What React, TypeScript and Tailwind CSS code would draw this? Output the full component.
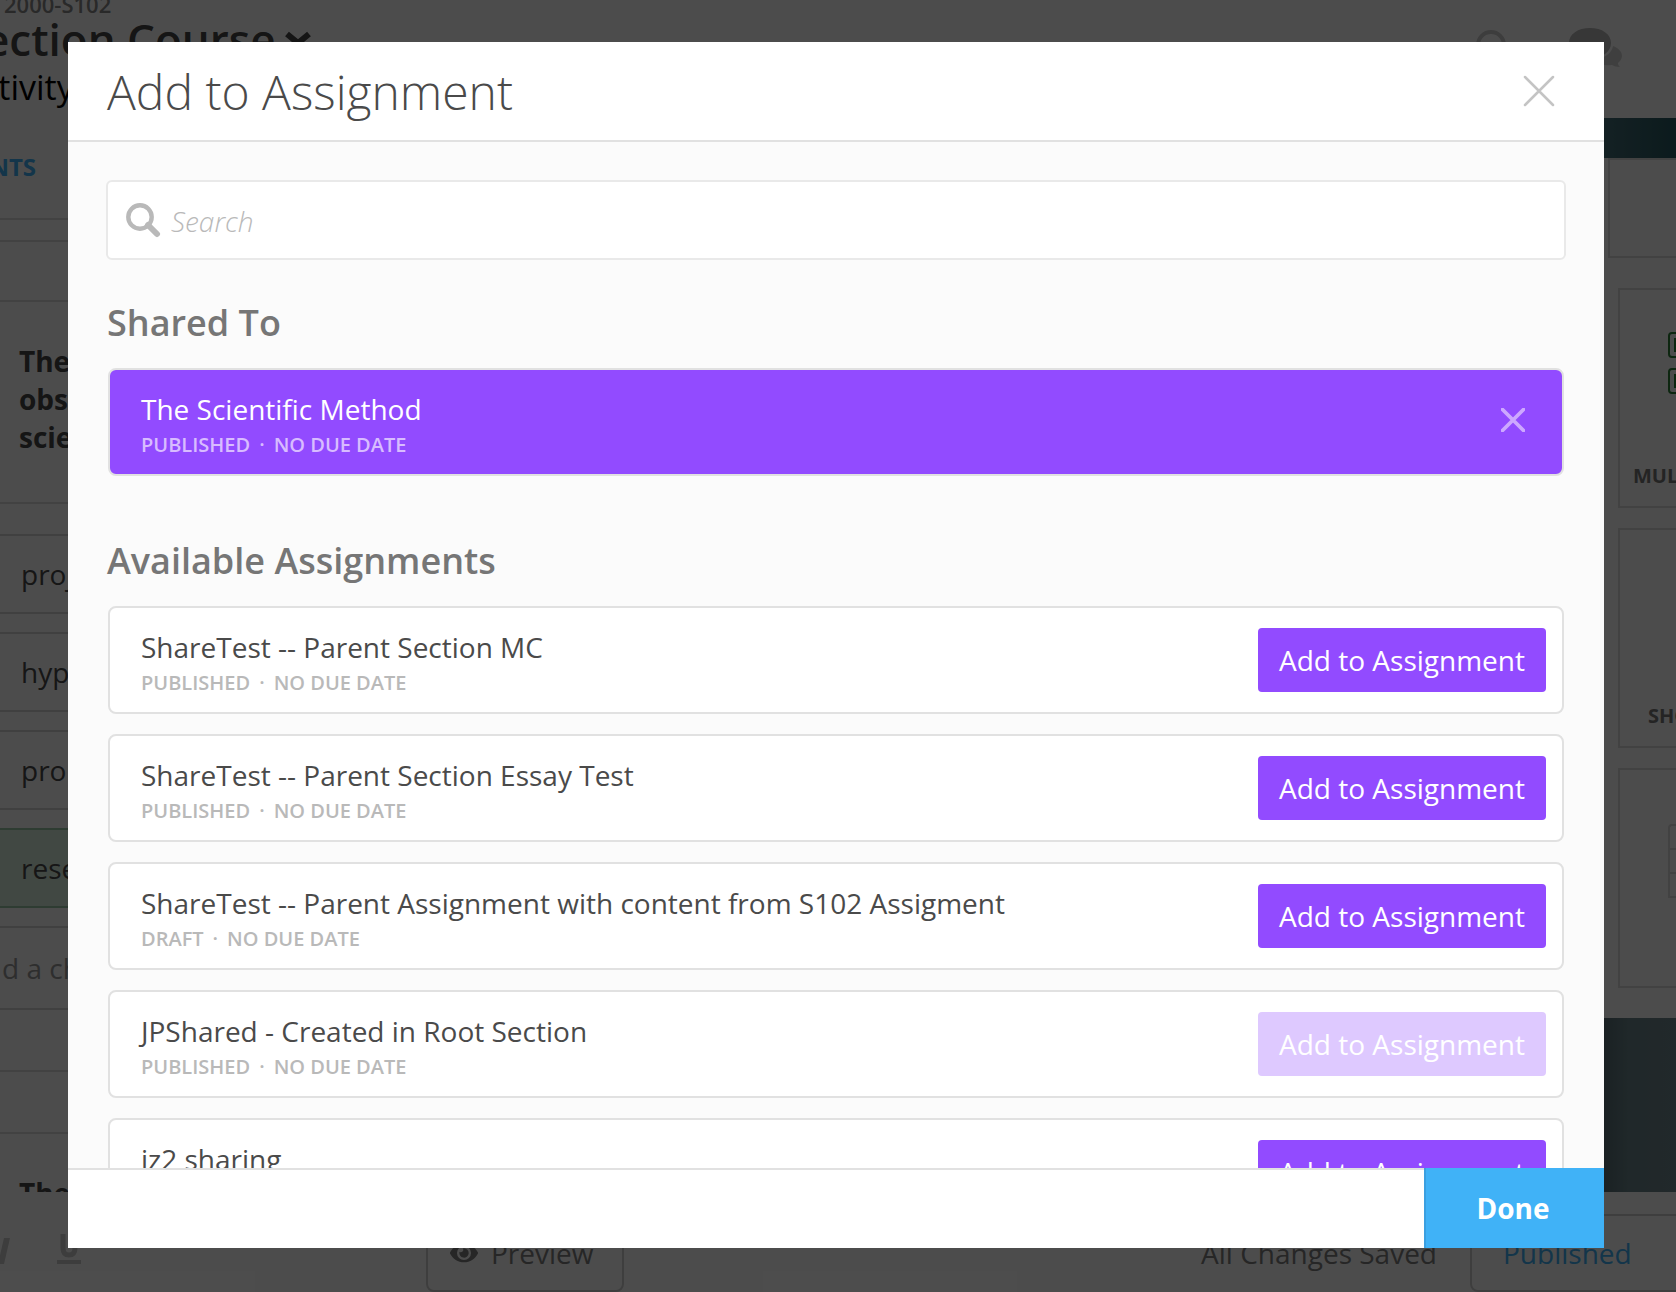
import React from "react";
import { FaEye } from "react-icons/fa";

type Assignment = { title: string; status: string; due: string; disabled?: boolean };

const shared: Assignment = { title: "The Scientific Method", status: "PUBLISHED", due: "NO DUE DATE" };

const available: Assignment[] = [
  { title: "ShareTest -- Parent Section MC", status: "PUBLISHED", due: "NO DUE DATE" },
  { title: "ShareTest -- Parent Section Essay Test", status: "PUBLISHED", due: "NO DUE DATE" },
  { title: "ShareTest -- Parent Assignment with content from S102 Assigment", status: "DRAFT", due: "NO DUE DATE" },
  { title: "JPShared - Created in Root Section", status: "PUBLISHED", due: "NO DUE DATE", disabled: true },
  { title: "iz2 sharing", status: "PUBLISHED", due: "NO DUE DATE" },
];

function Cross({ className, width }: { className: string; width: number }) {
  return (
    <svg viewBox="0 0 32 32" className={className} fill="none" stroke="currentColor" strokeWidth={width} strokeLinecap="round" aria-hidden="true">
      <path d="M2 2 30 30M30 2 2 30" />
    </svg>
  );
}

function Details({ item, titleClass, metaClass }: { item: Assignment; titleClass: string; metaClass: string }) {
  return (
    <div className="min-w-0 flex-1 pt-[7px]">
      <h3 className={`text-[28px] leading-9 ${titleClass}`}>{item.title}</h3>
      <p className={`mt-[2px] flex gap-[9px] text-xl leading-8 font-semibold ${metaClass}`}>
        <span>{item.status}</span>
        <span>·</span>
        <span>{item.due}</span>
      </p>
    </div>
  );
}

function TopBar() {
  return (
    <header className="flex h-[118px] shrink-0 justify-between overflow-hidden bg-white">
      <div className="flex flex-col">
        <p className="-mt-3 pl-1 text-[22px] leading-8 font-semibold text-[#8a8a8a]">2000-S102</p>
        <div className="-ml-4 flex items-center gap-2 text-[#464646]">
          <h2 className="text-[44px] leading-[38px] font-semibold">ection Course</h2>
          <svg viewBox="0 0 28 16" className="h-4 w-7" fill="none" stroke="currentColor" strokeWidth="6" aria-hidden="true">
            <path d="M3 3 14 12 25 3" />
          </svg>
        </div>
        <p className="-ml-[18px] pt-[6px] text-[34px] leading-[46px] text-black">ctivity</p>
      </div>
      <div className="flex items-start gap-[60px] pt-7">
        <svg viewBox="0 0 34 40" className="mt-[2px] h-10 w-[34px]" fill="none" stroke="#cccccc" strokeWidth="4" aria-hidden="true">
          <circle cx="17" cy="15" r="13" />
          <path d="m26 25 7 9" />
        </svg>
        <svg viewBox="0 0 54 40" className="mr-[54px] h-10 w-[54px]" aria-hidden="true">
          <path fill="#d4d4d4" d="M45 18c5 2 9 5 9 10 0 3-2 5-4 7 0 2 1 3 2 4-4 0-6-1-8-2-8 1-14-1-16-6 9-1 16-6 17-13Z" />
          <path fill="#b8b8b8" d="M22 0c12 0 21 6 21 15S34 30 22 30c-2 0-4 0-6-1-3 3-7 4-11 4 2-2 4-4 4-7-5-3-8-6-8-11C1 6 10 0 22 0Z" />
        </svg>
      </div>
    </header>
  );
}

function Editor() {
  const answers = ["proj", "hyp", "pro"];
  return (
    <main className="min-w-0 flex-1 overflow-hidden bg-white">
      <div className="flex h-[102px] items-center border-b-2 border-[#dddddd] pb-[2px]">
        <a href="#contents" className="-ml-6 text-2xl font-bold text-[#40b2f7]">ENTS</a>
      </div>
      <div className="mt-5 h-[62px] border-y-2 border-[#dddddd]" />
      <p className="h-[200px] w-[59px] pt-10 pl-[19px] text-[28px] leading-[38px] font-bold text-[#464646]">
        The obs scie
      </p>
      <div className="flex flex-col gap-[18px] border-t-2 border-[#dddddd] pt-[30px] text-[28px] text-[#4a4a4a]">
        {answers.map((a) => (
          <div key={a} className="flex h-20 items-center border-y-2 border-[#d8d8d8] pl-[21px]">{a}</div>
        ))}
        <div className="flex h-20 items-center border-y-2 border-[#9cc9a8] bg-[#dbf0e0] pl-[21px]">rese</div>
        <div className="flex h-[84px] items-center border-y-2 border-[#d8d8d8] pl-[2px] text-[#9a9a9a]">d a ch</div>
      </div>
      <div className="h-[62px] border-b-2 border-[#dddddd]" />
      <div className="h-[62px] border-b-2 border-[#dddddd]" />
      <p className="pt-10 pl-[19px] text-[28px] leading-[38px] font-bold text-[#464646]">The</p>
    </main>
  );
}

function Palette() {
  return (
    <aside className="w-20 shrink-0 overflow-hidden bg-[linear-gradient(90deg,#53686f,#6b868c_40%,#71898f)]">
      <div className="h-10 bg-linear-to-r from-[#46707a] to-[#285a62]" />
      <div className="h-[860px] bg-white">
        <div className="ml-3 h-[100px] border-y-2 border-l-2 border-[#dddddd]" />
        <div className="mt-[30px] ml-[22px] flex flex-col gap-5 text-xl font-bold text-[#787878]">
          <div className="h-[220px] overflow-hidden border-y-2 border-l-2 border-[#dddddd] pt-[42px]">
            <div className="ml-12 flex flex-col gap-[10px]">
              <div className="h-[26px] w-10 rounded border-2 border-[#2c8038] p-1"><div className="h-full bg-[#2c8038]" /></div>
              <div className="h-[26px] w-10 rounded border-2 border-[#2c8038] p-1"><div className="h-full bg-[#2c8038]" /></div>
            </div>
            <p className="mt-[68px] ml-[13px] leading-7">MUL</p>
          </div>
          <div className="h-[220px] border-y-2 border-l-2 border-[#dddddd] pt-[172px]">
            <p className="ml-7 leading-7">SHO</p>
          </div>
          <div className="h-[220px] border-y-2 border-l-2 border-[#dddddd] pt-[54px]">
            <div className="ml-12 rounded-tl border-2 border-r-0 border-[#dcdcdc]">
              <div className="h-6 border-b-2 border-[#dcdcdc]" />
              <div className="h-6 border-b-2 border-[#dcdcdc]" />
              <div className="h-[22px]" />
            </div>
          </div>
        </div>
      </div>
    </aside>
  );
}

function BottomBar() {
  return (
    <footer className="flex h-[100px] shrink-0 overflow-hidden bg-white pt-[22px] text-[28px] text-[#7f7f7f]">
      <div className="flex flex-1 text-[#cccccc]">
        <button type="button" aria-label="Italic" className="mt-4 h-11 w-10">
          <svg viewBox="0 0 40 44" className="h-11 w-10" aria-hidden="true"><path fill="currentColor" d="M4 8h6L4 34h-6z" /></svg>
        </button>
        <button type="button" aria-label="Underline" className="mt-4 ml-4 h-11 w-7">
          <svg viewBox="0 0 28 44" className="h-11 w-7" aria-hidden="true">
            <path d="M7 4v14q0 7 6 7t6-7V4" fill="none" stroke="currentColor" strokeWidth="5" />
            <path d="M1 30h24v4H1z" fill="currentColor" />
          </svg>
        </button>
        <button type="button" className="ml-[342px] flex items-center gap-[13px] rounded-lg border-2 border-[#d0d0d0] px-[22px] text-[#7f7f7f]">
          <FaEye className="h-7 w-7" />
          <span className="pr-[7px]">Preview</span>
        </button>
      </div>
      <span className="mr-[33px] self-center">All Changes Saved</span>
      <button type="button" className="-mr-2 w-[214px] rounded-lg border-2 border-[#d0d0d0] pl-[31px] text-left text-[#40b2f7]">
        Published
      </button>
    </footer>
  );
}

function AddDialog() {
  return (
    <section role="dialog" aria-modal="true" aria-labelledby="dialog-title" className="flex min-h-0 w-full flex-col bg-[#fbfbfb]">
      <header className="flex shrink-0 items-center justify-between border-b-2 border-[#e1e1e1] bg-white pr-[49px] pl-[39px]">
        <h1 id="dialog-title" className="pt-[17px] pb-[15px] text-5xl leading-[66px] font-light text-[#4a4a4a]">Add to Assignment</h1>
        <button type="button" aria-label="Close" className="text-[#c4c4c4]">
          <Cross className="h-8 w-8" width={2.5} />
        </button>
      </header>
      <div className="min-h-0 flex-1 overflow-y-auto px-[38px] pt-[38px] [scrollbar-width:none]">
        <label className="flex h-20 items-center gap-[10px] rounded-md border-2 border-[#e9e9e9] bg-white px-[17px]">
          <svg viewBox="0 0 36 36" className="h-9 w-9 shrink-0 text-[#b9b9b9]" fill="none" stroke="currentColor" aria-hidden="true">
            <circle cx="15" cy="15" r="11.700" strokeWidth="4.400" />
            <path d="m23 23 9 9" strokeWidth="6" strokeLinecap="round" />
          </svg>
          <input
            type="search"
            aria-label="Search"
            placeholder="Search"
            className="min-w-0 flex-1 pt-[2px] text-[28px] leading-10 font-light text-[#4a4a4a] italic outline-none placeholder:text-[#b9b9b9]"
          />
        </label>
        <h2 className="mt-[39px] pl-px text-4xl leading-[48px] font-semibold text-[#767676]">Shared To</h2>
        <div className="mx-[2px] mt-[21px] flex h-[108px] items-center rounded-lg border-2 border-[#e1e1e1] bg-[#924bff] pr-[37px] pl-[31px]">
          <Details item={shared} titleClass="font-medium text-white" metaClass="text-[#d8bcff]" />
          <button type="button" aria-label="Remove The Scientific Method" className="mb-1 text-[#cda8ff]">
            <Cross className="h-6 w-6" width={5} />
          </button>
        </div>
        <h2 className="mt-[61px] pl-px text-4xl leading-[48px] font-semibold text-[#767676]">Available Assignments</h2>
        <ul className="mx-[2px] mt-[21px] flex flex-col gap-5">
          {available.map((a) => (
            <li key={a.title} className="flex h-[108px] items-center rounded-lg border-2 border-[#e1e1e1] bg-white pr-4 pl-[31px]">
              <Details item={a} titleClass="text-[#4a4a4a]" metaClass="text-[#b9b9b9]" />
              <button
                type="button"
                disabled={a.disabled}
                className="h-16 w-72 shrink-0 rounded bg-[#924bff] text-[28px] font-medium text-white disabled:bg-[#dec9ff]"
              >
                Add to Assignment
              </button>
            </li>
          ))}
        </ul>
      </div>
      <footer className="flex h-20 shrink-0 bg-white">
        <div className="flex-1 border-t-2 border-[#e1e1e1]" />
        <button type="button" className="w-[180px] border-l-2 border-[#3b9fe0] bg-[#40b2f7] pr-1 text-[28px] font-bold text-white">
          Done
        </button>
      </footer>
    </section>
  );
}

export default function App() {
  return (
    <div className="relative flex h-screen flex-col overflow-hidden bg-white font-['Open_Sans',sans-serif]">
      <TopBar />
      <div className="flex min-h-0 flex-1">
        <Editor />
        <Palette />
      </div>
      <BottomBar />
      <div className="absolute inset-0 flex bg-black/70 pt-[42px] pr-[72px] pb-11 pl-[68px]">
        <AddDialog />
      </div>
    </div>
  );
}
